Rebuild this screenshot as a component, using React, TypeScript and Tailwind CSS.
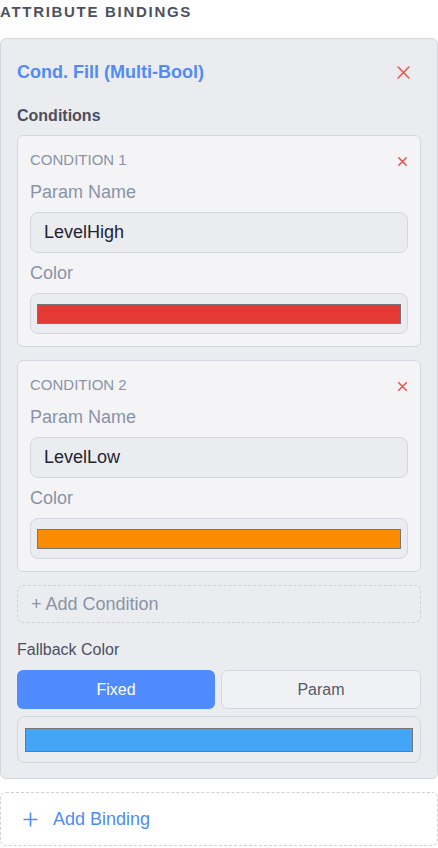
import React from 'react';

const font = { fontFamily: '"Liberation Sans", Arial, sans-serif' };

const XIcon = ({ size, className, stroke = 1.4 }: { size: number; className?: string; stroke?: number }) => (
  <svg width={size} height={size} viewBox="0 0 12 12" className={className} fill="none" stroke="currentColor" strokeWidth={stroke} strokeLinecap="round">
    <path d="M1 1 L11 11 M11 1 L1 11" />
  </svg>
);

interface Condition {
  param: string;
  color: string;
}

const conditions: Condition[] = [
  { param: 'LevelHigh', color: '#e53935' },
  { param: 'LevelLow', color: '#fb8c00' },
];

const ConditionCard = ({ index, cond }: { index: number; cond: Condition }) => (
  <div className="rounded-md border border-[#d5d7de] bg-[#f4f4f7] p-3">
    <div className="flex h-6 items-center justify-between">
      <span className="text-[15px] uppercase text-[#8a93a6]">Condition {index}</span>
      <XIcon size={9} stroke={2} className="mr-[1px] mt-[2px] text-[#e5534b]" />
    </div>
    <div className="my-2 text-[18px] leading-6 text-[#8a93a6]">Param Name</div>
    <div className="flex h-[41px] items-center rounded-lg border border-[#d5d7de] bg-[#ebecf0] px-[13px] text-[18px] text-[#1f2430]">
      {cond.param}
    </div>
    <div className="my-2 text-[18px] leading-6 text-[#8a93a6]">Color</div>
    <div className="flex h-[41px] items-center rounded-lg border border-[#d5d7de] bg-[#ebecf0] px-[6px]">
      <div className="h-5 w-full border border-[#767676]" style={{ backgroundColor: cond.color }} />
    </div>
  </div>
);

export default function App() {
  return (
    <div className="w-[438px] bg-white" style={font}>
      <div className="flex h-[25px] items-center text-[15px] font-bold uppercase tracking-[1.7px] text-[#4b5160]">
        Attribute Bindings
      </div>

      <div className="mt-[13px] rounded-md border border-[#d5d7de] bg-[#ebecf0] px-4 pb-[15px] pt-4">
        {/* Header */}
        <div className="mb-[15px] flex h-[34px] items-center justify-between">
          <span className="text-[18px] font-bold text-[#4f8cf7]">Cond. Fill (Multi-Bool)</span>
          <XIcon size={13} className="mr-[11px] text-[#e5534b]" />
        </div>

        <div className="mb-[7px] text-[16px] font-bold leading-6 text-[#4a5060]">Conditions</div>

        <div className="flex flex-col gap-[13px]">
          {conditions.map((c, i) => (
            <ConditionCard key={i} index={i + 1} cond={c} />
          ))}
          <div className="flex h-[38px] items-center rounded-md border border-dashed border-[#cfd1d8] px-[13px] text-[18px] text-[#8a93a6]">
            + Add Condition
          </div>
        </div>

        <div className="mb-2 mt-[15px] text-[16px] leading-6 text-[#4a5060]">Fallback Color</div>

        <div className="flex gap-[6px]">
          <button className="flex h-[39px] flex-1 items-center justify-center rounded-md bg-[#4f8bff] text-[16px] text-white">
            Fixed
          </button>
          <button className="flex h-[39px] flex-1 items-center justify-center rounded-md border border-[#d5d7de] bg-[#f0f1f4] text-[16px] text-[#555b6b]">
            Param
          </button>
        </div>

        <div className="mt-[7px] flex h-[47px] items-center rounded-lg border border-[#d5d7de] bg-[#ebecf0] px-[7px]">
          <div className="h-6 w-full border border-[#767676] bg-[#42a5f5]" />
        </div>
      </div>

      <div className="mt-[13px] flex h-[54px] items-center gap-[15px] rounded-md border border-dashed border-[#cfd1d8] bg-white pl-[22px] text-[18px] text-[#4f8cf7]">
        <svg width="15" height="15" viewBox="0 0 15 15" fill="none" stroke="currentColor" strokeWidth={1.6}>
          <path d="M7.5 0.5 V14.5 M0.5 7.5 H14.5" />
        </svg>
        <span>Add Binding</span>
      </div>
    </div>
  );
}
